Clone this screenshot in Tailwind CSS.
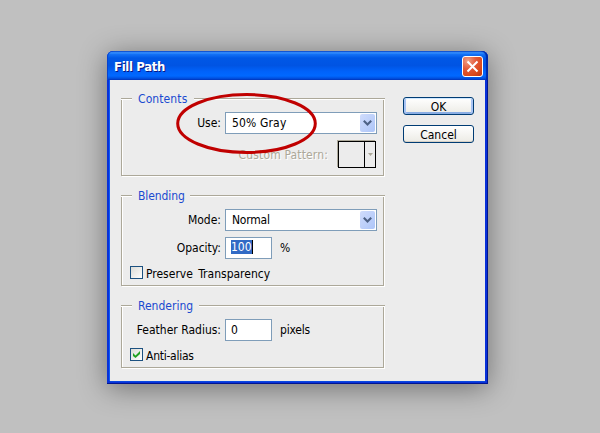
<!DOCTYPE html>
<html lang="en">
<head>
<meta charset="utf-8">
<title>Fill Path</title>
<script src="https://cdn.jsdelivr.net/npm/@tailwindcss/browser@4"></script>
</head>
<body class="relative h-[433px] w-[600px] overflow-hidden bg-[#c0c0c0] pt-[51px] pl-[107px] font-['DejaVu_Sans_Condensed','DejaVu_Sans',sans-serif] text-[12px] leading-[14px] tracking-[0px] text-black">
<main class="flex h-[333px] w-[381px] flex-col rounded-t-[6px] bg-linear-to-r from-[#0831d9] via-[#0855ee] to-[#001590] shadow-[0_4px_28px_rgba(0,0,0,0.42)]">
  <header class="flex h-[29px] shrink-0 items-center justify-between rounded-t-[6px] bg-[linear-gradient(180deg,#0844c8_0%,#3590ff_6%,#1270f5_12%,#0058e6_24%,#0054e3_50%,#0062fa_70%,#0068ff_86%,#0050e0_94%,#0036bd_100%)] pr-[5px] pl-[7px] shadow-[inset_1px_0_0_#0842cf,inset_-2px_0_1px_#0028a8]">
    <h1 class="mt-[2px] text-[13px] font-bold tracking-[-0.35px] text-white [text-shadow:1px_1px_0_#0a1883]">Fill Path</h1>
    <button class="mt-[2px] flex size-[21px] items-center justify-center rounded-[3px] border border-white bg-[radial-gradient(circle_at_25%_20%,#f0a086_0%,#e2593a_40%,#dc4a1c_70%,#b93412_100%)]" aria-label="Close">
      <svg width="13" height="13" viewBox="0 0 13 13"><path d="M1.5 1.5L11.5 11.5M11.5 1.5L1.5 11.5" stroke="#fff" stroke-width="2"/></svg>
    </button>
  </header>
  <div class="flex h-[304px] flex-col border-r border-b border-[#001590] bg-[#0831d9] pr-[2px] pb-[2px] pl-[3px]">
  <div class="flex h-[301px] bg-[#ececec] pl-[11px] shadow-[-1px_0_0_#0a5cf5,0_1px_0_#0a48e0]">
    <div class="w-[264px] pt-[11px]">
      <section>
        <div class="flex h-[16px] items-center">
          <i class="h-[2px] w-[11px] border-t border-[#aca899] bg-white"></i>
          <h2 class="w-[62px] pl-[6px] tracking-[0.1px] text-[#1a4ad0]">Contents</h2>
          <i class="h-[2px] flex-1 border-t border-[#aca899] bg-white"></i>
        </div>
        <div class="-mt-[8px] h-[77px] w-[263px] border-r border-b border-l border-[#aca899] pt-[13px] shadow-[1px_1px_0_#fff,inset_1px_0_0_#fff]">
          <div class="flex h-[22px] items-center">
            <span class="w-[99px] text-right">Use:</span>
            <div class="ml-[4px] flex h-[22px] w-[152px] items-center justify-between border border-[#7f9db9] bg-white pr-px pl-[6px]">
              <span class="tracking-[0.15px]">50% Gray</span>
              <span class="flex h-[18px] w-[15px] items-center justify-center rounded-[2px] bg-linear-to-br from-[#d0dcfc] to-[#adc5f8]"><svg width="9" height="6" viewBox="0 0 9 6"><path d="M.8 .8L4.5 4.5L8.2 .8" fill="none" stroke="#4d6185" stroke-width="2.1"/></svg></span>
            </div>
          </div>
          <div class="mt-[6px] flex h-[29px] items-center">
            <span class="w-[206px] text-right tracking-[0.15px] text-[#aca899] [text-shadow:1px_1px_0_#fff]">Custom Pattern:</span>
            <div class="ml-[10px] flex h-[27px] w-[38px] border border-black shadow-[-1px_-1px_0_#aca899]">
              <span class="w-[26px] border-r border-black"></span>
              <span class="flex flex-1 items-center justify-center"><svg width="5" height="3" viewBox="0 0 5 3"><path d="M0 0H5L2.5 3Z" fill="#aca899"/></svg></span>
            </div>
          </div>
        </div>
      </section>
      <section class="mt-[12px]">
        <div class="flex h-[16px] items-center">
          <i class="h-[2px] w-[11px] border-t border-[#aca899] bg-white"></i>
          <h2 class="w-[58px] pl-[6px] tracking-[-0.1px] text-[#1a4ad0]">Blending</h2>
          <i class="h-[2px] flex-1 border-t border-[#aca899] bg-white"></i>
        </div>
        <div class="-mt-[8px] h-[90px] w-[263px] border-r border-b border-l border-[#aca899] pt-[13px] shadow-[1px_1px_0_#fff,inset_1px_0_0_#fff]">
          <div class="flex h-[22px] items-center">
            <span class="w-[99px] text-right">Mode:</span>
            <div class="ml-[4px] flex h-[22px] w-[152px] items-center justify-between border border-[#7f9db9] bg-white pr-px pl-[6px]">
              <span class="tracking-[-0.2px]">Normal</span>
              <span class="flex h-[18px] w-[15px] items-center justify-center rounded-[2px] bg-linear-to-br from-[#d0dcfc] to-[#adc5f8]"><svg width="9" height="6" viewBox="0 0 9 6"><path d="M.8 .8L4.5 4.5L8.2 .8" fill="none" stroke="#4d6185" stroke-width="2.1"/></svg></span>
            </div>
          </div>
          <div class="mt-[6px] flex h-[22px] items-center">
            <span class="w-[99px] text-right">Opacity:</span>
            <div class="ml-[4px] flex h-[22px] w-[47px] border border-[#7f9db9] bg-white pt-[2px] pl-[5px]"><span class="h-[14px] w-[22px] border-r border-black bg-[#316ac5] text-white">100</span></div>
            <span class="ml-[8px]">%</span>
          </div>
          <label class="mt-[7px] flex h-[13px] items-center pl-[8px]">
            <span class="size-[13px] border border-[#1c5180] bg-linear-to-br from-[#dcdcd7] to-white"></span>
            <span class="mt-[2px] ml-[3px] [word-spacing:2px]">Preserve Transparency</span>
          </label>
        </div>
      </section>
      <section class="mt-[12px]">
        <div class="flex h-[16px] items-center">
          <i class="h-[2px] w-[11px] border-t border-[#aca899] bg-white"></i>
          <h2 class="w-[67px] pl-[6px] tracking-[0px] text-[#1a4ad0]">Rendering</h2>
          <i class="h-[2px] flex-1 border-t border-[#aca899] bg-white"></i>
        </div>
        <div class="-mt-[8px] h-[62px] w-[263px] border-r border-b border-l border-[#aca899] pt-[13px] shadow-[1px_1px_0_#fff,inset_1px_0_0_#fff]">
          <div class="flex h-[22px] items-center">
            <span class="w-[99px] text-right">Feather Radius:</span>
            <div class="ml-[4px] flex h-[22px] w-[47px] items-center border border-[#7f9db9] bg-white pl-[5px]">0</div>
            <span class="ml-[8px] tracking-[-0.2px]">pixels</span>
          </div>
          <label class="mt-[7px] flex h-[13px] items-center pl-[8px]">
            <span class="flex size-[13px] items-center justify-center border border-[#1c5180] bg-linear-to-br from-[#dcdcd7] to-white"><svg width="7" height="7" viewBox="0 0 7 7"><path d="M0 2L2.5 4.5L7 0V3L2.5 7L0 5Z" fill="#21a121"/></svg></span>
            <span class="mt-[2px] ml-[3px] tracking-[-0.25px]">Anti-alias</span>
          </label>
        </div>
      </section>
    </div>
    <div class="ml-[18px] flex flex-col gap-[10px] pt-[17px]">
      <button class="h-[18px] w-[71px] rounded-[3px] border border-[#003c74] bg-linear-to-b from-white to-[#ecebe5] leading-[18px] shadow-[inset_0_1px_0_#cee7ff,inset_2px_0_0_#a9c4f4,inset_-2px_0_0_#a9c4f4,inset_0_-2px_0_#89ade4]">OK</button>
      <button class="h-[18px] w-[71px] rounded-[3px] border border-[#003c74] bg-linear-to-b from-white to-[#ecebe5] leading-[18px] shadow-[inset_0_-1px_0_#d6d0c5]">Cancel</button>
    </div>
  </div>
  </div>
</main>
<svg class="absolute top-[91px] left-[174px]" width="145" height="65" viewBox="0 0 145 65"><ellipse cx="72.5" cy="32.5" rx="68.8" ry="29" fill="none" stroke="#c00000" stroke-width="3"/></svg>
</body>
</html>
